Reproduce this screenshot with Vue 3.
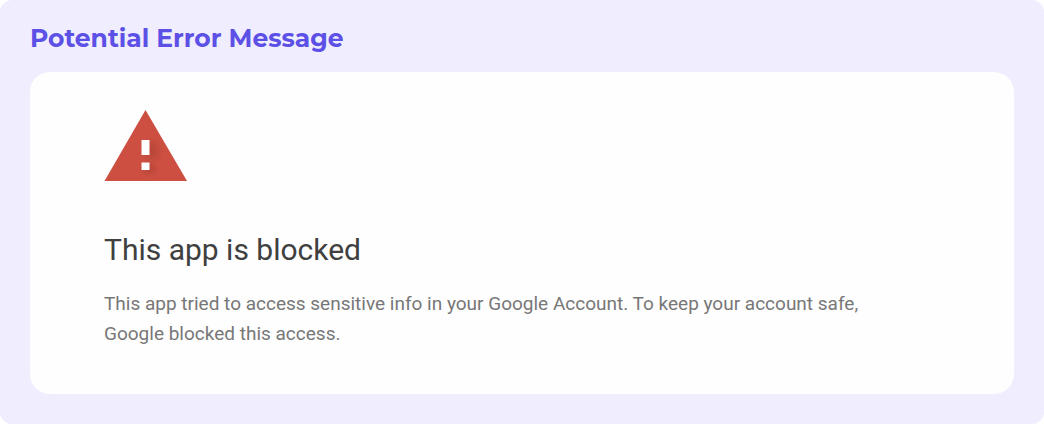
<script setup>
const title = 'Potential Error Message'
</script>

<template>
  <main class="panel">
    <h1 class="panel-title">{{ title }}</h1>
    <section class="card">
      <svg class="warning" viewBox="0 0 83 71" role="img" aria-label="Warning">
        <defs>
          <radialGradient id="mark-shade">
            <stop offset="0" stop-color="#a93f35" stop-opacity=".6" />
            <stop offset="1" stop-color="#a93f35" stop-opacity="0" />
          </radialGradient>
        </defs>
        <path d="M41.5 0 83 71H0.5Z" fill="#cc4f41" />
        <ellipse cx="48" cy="41" rx="11" ry="13" fill="url(#mark-shade)" />
        <ellipse cx="45" cy="59" rx="10" ry="9" fill="url(#mark-shade)" />
        <path d="M37.5 30h8v15h-8zM37.5 52.500h8v7.500h-8z" fill="#fff" />
      </svg>
      <h2 class="heading">This app is blocked</h2>
      <p class="message">
        This app tried to access sensitive info in your Google Account. To keep your account safe,
        Google blocked this access.
      </p>
    </section>
  </main>
</template>

<style>
body {
  margin: 0;
  background: #fff;
}
</style>

<style scoped>
.panel {
  box-sizing: border-box;
  min-height: 100vh;
  padding: 22px 30px 30px;
  border-radius: 12px;
  background: #efedfe;
}
.panel-title {
  margin: 0 0 18px;
  color: #5c50e6;
  font: 700 25px/32px Montserrat, Inter, sans-serif;
}
.card {
  padding: 38px 74px 45px;
  border-radius: 20px;
  background: #fefefe;
}
.warning {
  display: block;
  width: 83px;
  height: 71px;
}
.heading {
  margin: 50px 0 20px;
  color: #404040;
  font: 400 30px/38px Roboto, sans-serif;
}
.message {
  max-width: 760px;
  margin: 0;
  color: #777;
  font: 400 19px/30px Roboto, sans-serif;
}
</style>
